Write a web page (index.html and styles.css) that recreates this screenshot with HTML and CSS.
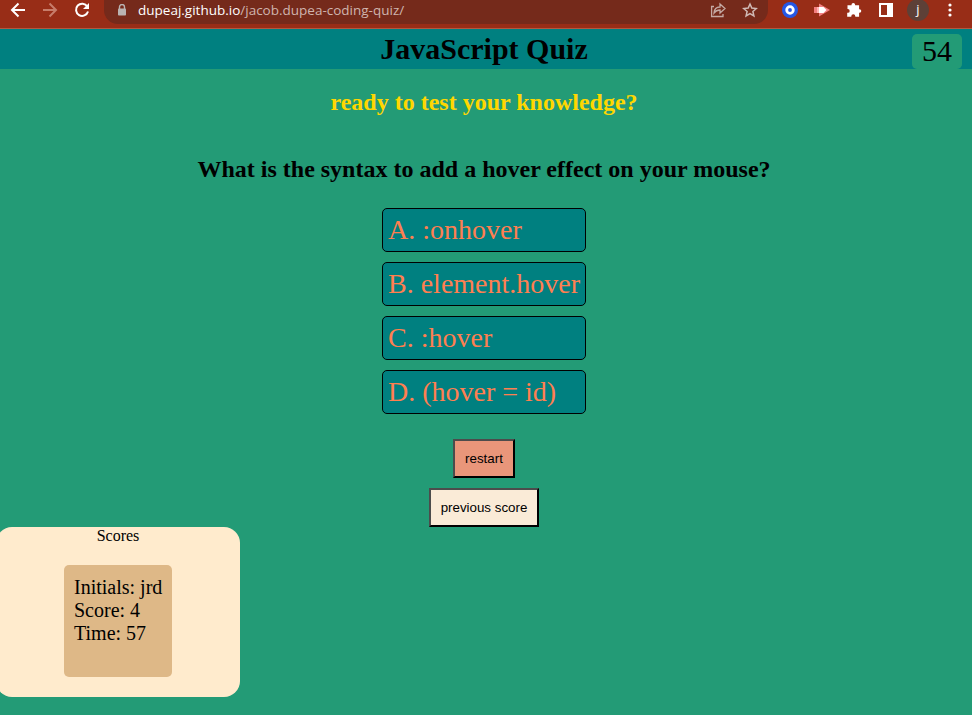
FILE: index.html
```html
<!DOCTYPE html>
<html lang="en">
<head>
<meta charset="utf-8">
<title>JavaScript Quiz</title>
<link rel="stylesheet" href="styles.css">
</head>
<body>
<div class="browser">
  <nav class="nav">
    <svg width="16" height="16" viewBox="0 0 16 16" fill="none" stroke="#fff" stroke-width="2"><path d="M15 8H2.500M8.500 1.500L2 8l6.500 6.500"/></svg>
    <svg width="16" height="16" viewBox="0 0 16 16" fill="none" stroke="#c77d6b" stroke-width="2"><path d="M1 8h12.500M7.500 1.500L14 8l-6.500 6.500"/></svg>
    <svg width="16" height="16" viewBox="0 0 16 16" fill="none" stroke="#fff" stroke-width="2"><path d="M13.300 4.500A6.100 6.100 0 1 0 14 9.500"/><path d="M15 1v6H9z" fill="#fff" stroke="none"/></svg>
  </nav>
  <div class="address">
    <svg class="lock" width="10" height="12" viewBox="0 0 10 12"><path d="M2.500 5V3a2.500 2.500 0 0 1 5 0v2" fill="none" stroke="#b9b3b2" stroke-width="1.400"/><rect x="1" y="4.500" width="8" height="7" rx=".8" fill="#b9b3b2"/></svg>
    <span class="url"><b>dupeaj.github.io</b>/jacob.dupea-coding-quiz/</span>
    <svg class="share" width="16" height="16" viewBox="0 0 16 16" fill="none" stroke="#c5aaa4" stroke-width="1.300"><path d="M4 4.500H1.600v10h11.400V12"/><path d="M4 11c.3-4 2.300-6 6-6V2l5 4.500-5 4.500V8C7.500 8 5.500 9 4 11z"/></svg>
    <svg width="16" height="16" viewBox="0 0 16 16" fill="none" stroke="#d0bab6" stroke-width="1.500"><path d="M8 2l1.800 4.100 4.500.4-3.400 3 1 4.400L8 11.600l-3.900 2.300 1-4.400-3.400-3 4.500-.4z"/></svg>
  </div>
  <div class="extensions">
    <svg width="16" height="16" viewBox="0 0 16 16"><circle cx="8" cy="8" r="8" fill="#2457e6"/><circle cx="8" cy="8" r="3.300" fill="none" stroke="#fff" stroke-width="2.800"/></svg>
    <svg width="16" height="16" viewBox="0 0 16 16"><path d="M0 5h5V1.500L16 8 5 14.500V11H0z" fill="#f27f80"/><path d="M5 5h4.500l3 3-3 3H5z" fill="#fff"/><path d="M3 5h2v6H3z" fill="#ffb5b5"/></svg>
    <svg width="16" height="16" viewBox="0 0 16 16"><path d="M1.500 3.200h4V2.700a1.800 1.800 0 0 1 3.600 0v.5h4v4h.4a1.800 1.800 0 0 1 0 3.600h-.4v4H9.300v-.6a2 2 0 0 0-4 0v.6H1.200v-4h.6a1.900 1.900 0 0 0 0-3.800h-.3z" fill="#fff"/></svg>
    <svg width="16" height="16" viewBox="0 0 16 16"><path fill="#fff" fill-rule="evenodd" d="M1 1h14v14H1zM3 3v10h6V3z"/></svg>
    <span class="avatar">j</span>
    <svg width="16" height="16" viewBox="0 0 16 16" fill="#fff"><circle cx="8" cy="3" r="1.600"/><circle cx="8" cy="8" r="1.600"/><circle cx="8" cy="13" r="1.600"/></svg>
  </div>
</div>
<header class="header">
  <h1>JavaScript Quiz</h1>
  <div class="timer">54</div>
</header>
<main class="quiz">
  <h2 class="intro">ready to test your knowledge?</h2>
  <h2 class="question">What is the syntax to add a hover effect on your mouse?</h2>
  <ul class="options">
    <li>A. :onhover</li>
    <li>B. element.hover</li>
    <li>C. :hover</li>
    <li>D. (hover = id)</li>
  </ul>
  <button class="btn restart">restart</button>
  <button class="btn previous">previous score</button>
</main>
<aside class="scores">
  <div class="scores-title">Scores</div>
  <div class="record">Initials: jrd<br>Score: 4<br>Time: 57</div>
</aside>
</body>
</html>
```
FILE: styles.css
```css
* { box-sizing: border-box; }
body {
  margin: 0;
  height: 715px;
  overflow: hidden;
  background: #239b76;
  color: #000;
  font-family: "Liberation Serif", "Times New Roman", serif;
}
svg { display: block; flex: none; }
.browser {
  display: flex;
  height: 29px;
  background: #982d17;
  border-bottom: 1px solid #b3593f;
}
.nav {
  display: flex;
  gap: 16px;
  width: 104px;
  padding: 2px 0 0 10px;
}
.address {
  display: flex;
  width: 664px;
  height: 24px;
  padding: 2px 10px 0 13px;
  background: #752a1b;
  border-radius: 0 0 14px 14px;
}
.lock { margin-top: 2px; }
.url {
  margin-left: 11px;
  flex: 1;
  font: 13.5px/17px "Open Sans", sans-serif;
  color: #cfb4ae;
  white-space: nowrap;
}
.url b { font-weight: 400; color: #fff; }
.share { margin-right: 16px; }
.extensions {
  display: flex;
  gap: 16px;
  padding: 2px 0 0 14px;
}
.avatar {
  width: 22px;
  height: 22px;
  margin: -3px;
  border-radius: 50%;
  background: #5d4037;
  color: #fff;
  font: 13px/21px "Open Sans", sans-serif;
  text-align: center;
}
.header {
  display: flex;
  height: 40px;
  padding: 0 10px 0 56px;
  background: #008080;
}
h1, h2 { margin: 0; white-space: nowrap; }
h1 {
  flex: 1;
  font-size: 30px;
  line-height: 40px;
  text-align: center;
}
.timer {
  width: 50px;
  height: 35px;
  margin-top: 5px;
  border-radius: 5px;
  background: #239b76;
  font-size: 30px;
  line-height: 34px;
  text-align: center;
}
.quiz {
  display: flex;
  flex-direction: column;
  align-items: center;
  width: 968px;
  height: 458px;
}
.intro {
  margin-top: 20px;
  color: #ffd700;
  font-size: 24px;
  line-height: 27px;
}
.question {
  margin-top: 40px;
  font-size: 24px;
  line-height: 27px;
}
.options {
  display: flex;
  flex-direction: column;
  gap: 10px;
  width: 204px;
  margin: 25px 0;
  padding: 0;
  list-style: none;
}
.options li {
  height: 44px;
  padding-left: 5px;
  border: 1px solid #000;
  border-radius: 5px;
  background: #008080;
  color: #ff7f50;
  font-size: 28px;
  line-height: 42px;
  white-space: nowrap;
}
.btn {
  height: 39px;
  flex: none;
  padding: 0;
  border: 2px solid;
  border-color: #4c4c4c #000 #000 #4c4c4c;
  color: #000;
  font: 13.333px "Liberation Sans", Arial, sans-serif;
}
.restart { width: 62px; background: #e9967a; }
.previous { width: 110px; margin-top: 10px; background: #faebd7; }
.scores {
  display: flex;
  flex-direction: column;
  align-items: center;
  width: 244px;
  height: 170px;
  margin-left: -4px;
  border-radius: 16px;
  background: #ffebcd;
}
.scores-title { font-size: 16px; line-height: 18px; }
.record {
  width: 108px;
  height: 112px;
  margin-top: 20px;
  padding: 11px 0 0 10px;
  border-radius: 5px;
  background: #deb887;
  font-size: 20px;
  line-height: 23px;
  white-space: nowrap;
}
```
